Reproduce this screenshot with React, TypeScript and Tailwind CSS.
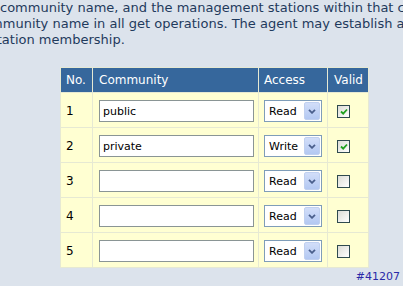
import React from "react"

// SNMP community table — static recreation of the device config page.

type Row = { no: number; community: string; access: "Read" | "Write"; valid: boolean }

const ROWS: Row[] = [
  { no: 1, community: "public", access: "Read", valid: true },
  { no: 2, community: "private", access: "Write", valid: true },
  { no: 3, community: "", access: "Read", valid: false },
  { no: 4, community: "", access: "Read", valid: false },
  { no: 5, community: "", access: "Read", valid: false },
]

const font = "font-['DejaVu_Sans',Verdana,sans-serif]"

function FakeSelect({ value }: { value: string }) {
  return (
    <div className="flex h-[22px] w-[58px] items-center border border-[#7f9db9] bg-white">
      <span className="flex-1 pl-[4px] text-[11px] leading-none text-black">{value}</span>
      <span className="mr-px flex h-[18px] w-[16px] items-center justify-center rounded-[2px] bg-gradient-to-b from-[#d2def9] to-[#b3c8f2] border border-[#c0d0f0]">
        <svg width="8" height="5" viewBox="0 0 8 5">
          <path d="M1 0.8 L4 3.8 L7 0.8" fill="none" stroke="#4a5f8c" strokeWidth="1.8" />
        </svg>
      </span>
    </div>
  )
}

function FakeCheck({ checked }: { checked: boolean }) {
  return (
    <div className="flex h-[13px] w-[13px] items-center justify-center border border-[#2f4a4f] bg-gradient-to-br from-[#dcdcd6] to-white">
      {checked && (
        <svg width="8" height="7" viewBox="0 0 8 7">
          <path d="M1 3.5 L3.2 5.7 L7 1.5" fill="none" stroke="#21a121" strokeWidth="1.8" />
        </svg>
      )}
    </div>
  )
}

export default function App() {
  return (
    <div className={`h-[286px] w-[403px] overflow-hidden bg-[#dce3ec] ${font}`}>
      {/* the page is scrolled sideways, so the paragraph is cut at both edges */}
      <div className="overflow-hidden text-[13px] leading-[16px] text-[#1f3a5c]">
        <div className="whitespace-nowrap">community name, and the management stations within that community</div>
        <div className="ml-[-25px] whitespace-nowrap">community name in all get operations. The agent may establish a</div>
        <div className="ml-[-10px] whitespace-nowrap">station membership.</div>
      </div>

      <table className="ml-[60px] mt-[19px] border-separate border-spacing-px bg-[#e6e9d3] text-[12px]">
        <thead>
          <tr className="h-[24px] bg-[#36679c] text-left text-white">
            <th className="w-[31px] pl-[5px] font-normal">No.</th>
            <th className="w-[165px] pl-[6px] font-normal">Community</th>
            <th className="w-[68px] pl-[5px] font-normal">Access</th>
            <th className="w-[40px] pl-[6px] font-normal">Valid</th>
          </tr>
        </thead>
        <tbody>
          {ROWS.map((r) => (
            <tr key={r.no} className="h-[34px] bg-[#ffffd2] text-black">
              <td className="pl-[5px] pt-[2px]">{r.no}</td>
              <td className="pl-[6px] pt-[2px]">
                <input
                  type="text"
                  defaultValue={r.community}
                  className="block h-[22px] w-[155px] border border-[#8a9595] bg-white px-[3px] text-[11px] text-black outline-none"
                />
              </td>
              <td className="pl-[5px] pt-[2px]">
                <FakeSelect value={r.access} />
              </td>
              <td className="pl-[9px] pt-[2px]">
                <FakeCheck checked={r.valid} />
              </td>
            </tr>
          ))}
        </tbody>
      </table>

      <div className="mt-[2px] pr-[3px] text-right text-[11px] leading-[14px] text-[#2a2aa8]">#41207</div>
    </div>
  )
}
